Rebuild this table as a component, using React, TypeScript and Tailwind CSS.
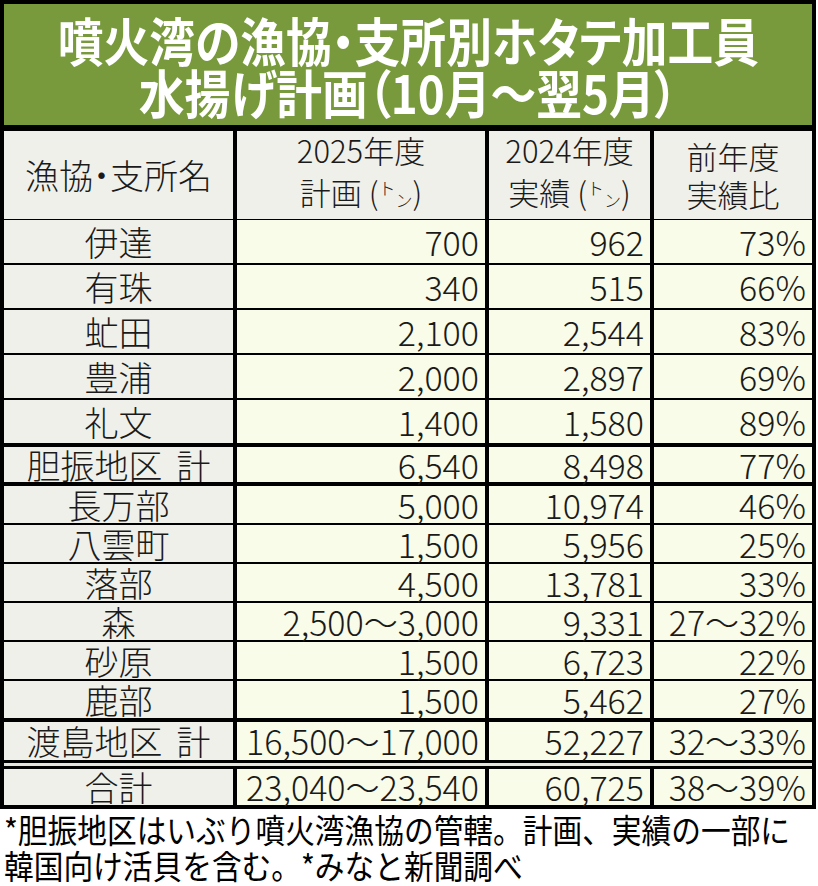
const ROWS_A = [
  ["伊達", "700", "962", "73%"],
  ["有珠", "340", "515", "66%"],
  ["虻田", "2,100", "2,544", "83%"],
  ["豊浦", "2,000", "2,897", "69%"],
  ["礼文", "1,400", "1,580", "89%"],
];

const ROWS_B = [
  ["長万部", "5,000", "10,974", "46%"],
  ["八雲町", "1,500", "5,956", "25%"],
  ["落部", "4,500", "13,781", "33%"],
  ["森", "2,500～3,000", "9,331", "27～32%"],
  ["砂原", "1,500", "6,723", "22%"],
  ["鹿部", "1,500", "5,462", "27%"],
];

const GRID = "grid grid-cols-[229px_248px_161px_158px] gap-x-[4px]";

function Row({ cells, h, sub }: { cells: string[]; h: string; sub?: boolean }) {
  return (
    <div className={`${GRID} ${h}`}>
      <div className="flex items-center justify-center bg-[#f0f0ea]">
        {sub ? (
          <>
            {cells[0].slice(0, 4)}
            <span className="ml-[14px]">{cells[0].slice(4)}</span>
          </>
        ) : (
          cells[0]
        )}
      </div>
      {cells.slice(1).map((c, i) => (
        <div key={i} className="flex items-center justify-end pr-[6px] bg-[#f8fce8]">
          {c}
        </div>
      ))}
    </div>
  );
}

function Ton() {
  return (
    <span>
      {" "}(<span className="text-[17px] align-[10px]">ト</span>
      <span className="text-[17px] align-[-2px]">ン</span>)
    </span>
  );
}

export default function App() {
  return (
    <div className="w-[818px] h-[886px] overflow-hidden bg-white font-['Noto_Sans_CJK_JP',sans-serif] text-[#1a1a1a]">
      <div className="w-[816px] bg-black p-[4px] flex flex-col">
        <div className="h-[121px] bg-[#789a3c] flex flex-col items-center justify-center pt-[3px] text-white font-bold text-[52px] leading-[52px] [font-feature-settings:'palt']">
          <div className="scale-x-[0.88] whitespace-nowrap">噴火湾の漁協・支所別ホタテ加工員</div>
          <div className="scale-x-[0.88] whitespace-nowrap">水揚げ計画（10月～翌5月）</div>
        </div>

        <div className="mt-[6px] text-[34px] leading-none font-light">
          <div className={`${GRID} h-[85px] text-[31px] leading-[38px] text-center`}>
            <div className="flex items-center justify-center bg-[#f0f0ea] text-[34px] [font-feature-settings:'palt']">
              漁協・支所名
            </div>
            <div className="flex flex-col items-center justify-center bg-[#f0f0ea]">
              <span>2025年度</span>
              <span>計画<Ton /></span>
            </div>
            <div className="flex flex-col items-center justify-center bg-[#f0f0ea]">
              <span>2024年度</span>
              <span>実績<Ton /></span>
            </div>
            <div className="flex flex-col items-center justify-center bg-[#f0f0ea]">
              <span>前年度</span>
              <span>実績比</span>
            </div>
          </div>

          <div className="mt-[4px] flex flex-col gap-[2px]">
            {ROWS_A.map((r) => (
              <Row key={r[0]} cells={r} h="h-[43px]" />
            ))}
          </div>

          <div className="mt-[4px]">
            <Row cells={["胆振地区計", "6,540", "8,498", "77%"]} h="h-[35px]" sub />
          </div>

          <div className="mt-[4px] flex flex-col gap-[2px]">
            {ROWS_B.map((r) => (
              <Row key={r[0]} cells={r} h="h-[37px]" />
            ))}
          </div>

          <div className="mt-[4px]">
            <Row cells={["渡島地区計", "16,500～17,000", "52,227", "32～33%"]} h="h-[38px]" sub />
          </div>

          <div className="mt-[3px] h-[3px] bg-[#e4e4dc]" />

          <div className="mt-[3px]">
            <Row cells={["合計", "23,040～23,540", "60,725", "38～39%"]} h="h-[36px]" />
          </div>
        </div>
      </div>

      <div className="pl-[4px] pt-[2px] text-[33px] leading-[36px] text-black">
        <div className="origin-left scale-x-[0.9] whitespace-nowrap">*胆振地区はいぶり噴火湾漁協の管轄。計画、実績の一部に</div>
        <div className="origin-left scale-x-[0.9] whitespace-nowrap">韓国向け活貝を含む。*みなと新聞調べ</div>
      </div>
    </div>
  );
}
